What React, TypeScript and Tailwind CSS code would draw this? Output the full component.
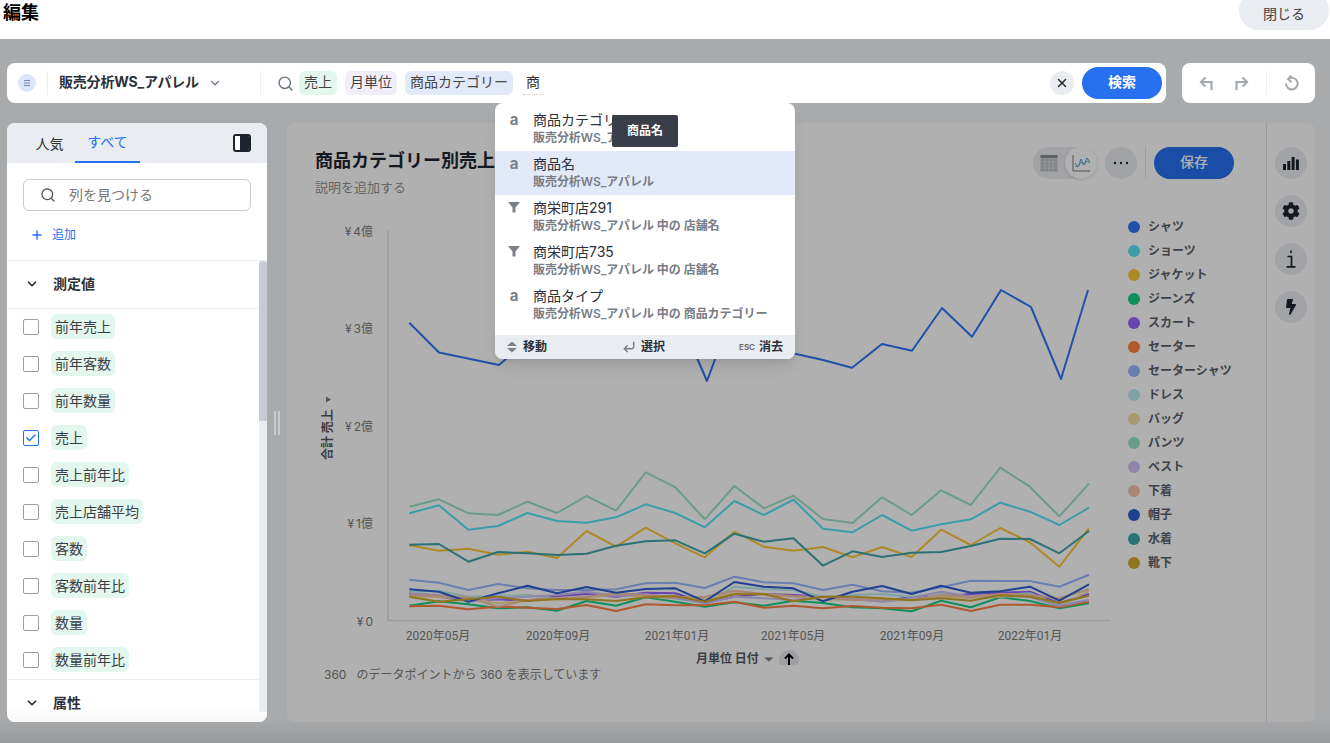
import { ChevronDown, CornerDownLeft, Check, Plus, Search, X } from 'lucide-react';
import { FaBolt, FaCog } from 'react-icons/fa';

const toPoints = (zs: number[]) => zs.map((z, i) => `${(409.3 + 29.55 * i).toFixed(1)},${(440 + z / 3).toFixed(1)}`).join(' ');

const shirts =
  '409.3,322.7 439,352.5 499,365 528,340 558,330 588,345 617,320 647,300 677,312 707,381 737,300 766,340 795,353.7 823,360 852,367.7 882,344 912,350.7 942,308 972,336.7 1001,290 1031,307 1061,379 1088,290';

const series = [
  { name: 'シャツ', color: '#2f75f5' },
  { name: 'ショーツ', color: '#55e4f2', z: [220, 196, 269, 258, 219, 243, 248, 232, 193, 219, 262, 183, 225, 179, 266, 277, 225, 272, 253, 238, 188, 215, 255, 203] },
  { name: 'ジャケット', color: '#fcc838', z: [316, 332, 326, 344, 335, 354, 273, 320, 263, 310, 352, 275, 320, 332, 321, 352, 321, 351, 269, 315, 264, 307, 380, 265] },
  { name: 'ジーンズ', color: '#18d084', z: [497, 484, 493, 505, 502, 512, 483, 497, 472, 485, 500, 487, 497, 482, 489, 502, 505, 514, 482, 502, 472, 483, 505, 490] },
  { name: 'スカート', color: '#9763ff', z: [462, 470, 482, 478, 483, 468, 462, 470, 458, 460, 488, 470, 462, 465, 470, 478, 482, 472, 470, 462, 458, 455, 490, 462] },
  { name: 'セーター', color: '#ff8142', z: [499, 497, 508, 500, 503, 507, 495, 513, 493, 496, 496, 485, 503, 497, 505, 498, 503, 505, 494, 513, 494, 494, 502, 485] },
  { name: 'セーターシャツ', color: '#97b8ff', z: [419, 428, 450, 432, 445, 450, 450, 448, 430, 428, 444, 410, 427, 430, 450, 434, 454, 458, 442, 422, 423, 423, 440, 404] },
  { name: 'ドレス', color: '#b8ecef', z: [455, 452, 470, 468, 465, 478, 470, 462, 465, 470, 490, 440, 448, 450, 470, 465, 462, 470, 458, 470, 465, 460, 495, 480] },
  { name: 'バッグ', color: '#f5dfa8', z: [468, 472, 475, 490, 480, 478, 472, 465, 470, 475, 478, 458, 465, 470, 480, 478, 482, 480, 470, 475, 470, 468, 498, 452] },
  { name: 'パンツ', color: '#9ce3c9', z: [200, 178, 220, 225, 185, 219, 168, 212, 97, 142, 238, 138, 205, 167, 237, 249, 172, 225, 151, 195, 83, 140, 229, 131] },
  { name: 'ベスト', color: '#d0c0f5', z: [460, 465, 480, 475, 470, 465, 455, 468, 462, 475, 490, 470, 475, 480, 470, 478, 485, 475, 455, 470, 465, 470, 498, 480] },
  { name: '下着', color: '#f5c4a8', z: [465, 468, 472, 500, 480, 475, 470, 460, 465, 472, 470, 452, 462, 468, 472, 480, 478, 480, 465, 470, 462, 465, 475, 448] },
  { name: '帽子', color: '#2f5fd0', z: [448, 455, 485, 460, 437, 460, 441, 458, 447, 445, 484, 426, 440, 445, 484, 455, 438, 462, 437, 458, 454, 440, 482, 433] },
  { name: '水着', color: '#3fa6ac', z: [314, 312, 365, 336, 340, 345, 341, 317, 304, 301, 340, 281, 305, 295, 377, 334, 351, 338, 336, 318, 296, 297, 340, 273] },
  { name: '靴下', color: '#d4a82e', z: [470, 485, 478, 470, 483, 477, 478, 483, 472, 468, 485, 463, 462, 484, 470, 470, 475, 481, 475, 482, 466, 470, 488, 467] },
];

const measures = ['前年売上', '前年客数', '前年数量', '売上', '売上前年比', '売上店舗平均', '客数', '客数前年比', '数量', '数量前年比'];

const suggestions = [
  { icon: 'a', title: '商品カテゴリー', sub: '販売分析WS_アパレル', first: true },
  { icon: 'a', title: '商品名', sub: '販売分析WS_アパレル', active: true },
  { icon: 'f', title: '商栄町店291', sub: '販売分析WS_アパレル 中の 店舗名' },
  { icon: 'f', title: '商栄町店735', sub: '販売分析WS_アパレル 中の 店舗名' },
  { icon: 'a', title: '商品タイプ', sub: '販売分析WS_アパレル 中の 商品カテゴリー' },
];

const yTicks = [
  { label: '4億', y: 232 },
  { label: '3億', y: 329 },
  { label: '2億', y: 427 },
  { label: '1億', y: 524 },
  { label: '0', y: 622 },
];

const xTicks = [
  { label: '2020年05月', x: 438 },
  { label: '2020年09月', x: 558 },
  { label: '2021年01月', x: 677 },
  { label: '2021年05月', x: 793 },
  { label: '2021年09月', x: 912 },
  { label: '2022年01月', x: 1030 },
];

function Chart() {
  return (
    <svg width="833" height="450" viewBox="287 215 833 450" className="block shrink-0">
      <path d="M388 230V620.500H1110" fill="none" stroke="#e2e2e2" strokeWidth="1.500" />
      {yTicks.map((t) => (
        <text key={t.label} x="373" y={t.y + 4} textAnchor="end" fontSize="12" fill="#7d7d7d">
          <tspan>¥</tspan>
          <tspan dx="2">{t.label}</tspan>
        </text>
      ))}
      {xTicks.map((t) => (
        <text key={t.label} x={t.x} y="640" textAnchor="middle" fontSize="12" fill="#7d7d7d" fontFamily="Roboto, 'Noto Sans CJK JP', sans-serif">
          {t.label}
        </text>
      ))}
      <polyline points={shirts} fill="none" stroke={series[0].color} strokeWidth="2" strokeLinejoin="round" />
      {series.slice(1).map((s) => (
        <polyline key={s.name} points={toPoints(s.z!)} fill="none" stroke={s.color} strokeWidth="2" strokeLinejoin="round" />
      ))}
      <text transform="translate(332 460) rotate(-90)" fontSize="12" fontWeight="700" fill="#55585f">
        合計 売上
      </text>
      <path d="M326 396.500l5 3-5 3z" fill="#7d7d7d" />
      <text x="696" y="663" fontSize="12" fontWeight="700" fill="#55585f">
        月単位 日付
      </text>
      <path d="M764 657.500h9.500l-4.750 4z" fill="#7d7d7d" />
      <circle cx="789" cy="660" r="10" fill="#e6e6ee" />
      <path d="M789 666v-11M785 658.500l4-4 4 4" fill="none" stroke="#000" strokeWidth="2" />
    </svg>
  );
}

function SearchBar() {
  return (
    <div className="relative z-20 flex h-10 flex-1 items-center rounded-lg bg-white pl-[11px] pr-1">
      <div className="flex h-[18px] w-[18px] items-center justify-center rounded-full bg-[#dbe6f9]">
        <svg width="8" height="8" viewBox="0 0 8 8">
          <path d="M1 1.500h6M1 4h6M1 6.500h6" stroke="#6f86b5" strokeWidth="1.100" />
        </svg>
      </div>
      <div className="ml-[11px] h-6 w-px bg-[#eceef1]" />
      <div className="ml-[11px] w-[142px] whitespace-nowrap pb-[2px] text-sm font-bold tracking-[-0.2px] text-[#2b303a]">販売分析WS_アパレル</div>
      <ChevronDown className="ml-[7px] h-[14px] w-[14px] text-[#6b7280]" />
      <div className="ml-[38px] h-6 w-px bg-[#eceef1]" />
      <Search className="ml-4 h-[17px] w-[17px] text-[#6b7280]" />
      <div className="ml-[5px] flex h-6 w-[38px] items-center justify-center rounded-md bg-[#e3f7ee] pb-[2px] text-sm text-[#444]">売上</div>
      <div className="ml-2 flex h-6 w-[52px] items-center justify-center rounded-md bg-[#f1eefb] pb-[2px] text-sm text-[#444]">月単位</div>
      <div className="ml-2 flex h-6 w-[108px] items-center justify-center rounded-md bg-[#e2e9f9] pb-[2px] text-sm text-[#444]">商品カテゴリー</div>
      <div className="ml-[10px] flex h-6 w-5 items-center justify-center border-b border-dotted border-[#ccc] pb-[2px] text-sm text-[#333]">商</div>
      <div className="ml-auto flex h-6 w-6 items-center justify-center rounded-full bg-[#e9ecf1]">
        <X className="h-[14px] w-[14px] text-[#1d232f]" strokeWidth={2.5} />
      </div>
      <div className="ml-2 flex h-8 w-20 items-center justify-center rounded-full bg-[#2770ef] pb-[2px] text-sm font-bold text-white">検索</div>

      {/* Suggestions dropdown */}
      <div className="absolute left-[488px] top-10 w-[300px] overflow-hidden rounded-lg bg-white shadow-lg">
        <div className="pb-2">
          {suggestions.map((s) => (
            <div
              key={s.title}
              className={`flex h-11 items-start ${s.first ? 'mt-1' : ''} ${s.active ? 'bg-[#e2eafa]' : ''}`}
            >
              <div className="flex h-[24px] w-[38px] items-center justify-center">
                {s.icon === 'a' ? (
                  <span className="text-[15px] font-bold leading-none text-[#7b8089]">a</span>
                ) : (
                  <svg width="12" height="12" viewBox="0 0 12 12">
                    <path d="M0 1h12L7.500 6.500V11.500H4.500V6.500z" fill="#7b8089" />
                  </svg>
                )}
              </div>
              <div>
                <div className="h-[23px] pt-[3px] text-sm leading-5 text-[#2b303a]">{s.title}</div>
                <div className="text-xs font-semibold leading-4 tracking-[-0.05px] text-[#777c86]">{s.sub}</div>
              </div>
            </div>
          ))}
        </div>
        <div className="flex h-6 items-center justify-between bg-[#e9ecf1] pl-[11px] pr-3 text-xs font-bold text-[#2b303a]">
          <div className="flex items-center gap-[5px]">
            <svg width="12" height="12" viewBox="0 0 12 12">
              <path d="M6 .5l5 4.500H1zM6 11.500l-5-4.500h10z" fill="#7b8089" />
            </svg>
            移動
          </div>
          <div className="ml-[1px] flex items-center gap-[5px]">
            <CornerDownLeft className="h-[14px] w-[14px] text-[#7b8089]" strokeWidth={2.5} />
            選択
          </div>
          <div className="flex items-center gap-[4px]">
            <span className="text-[8px] font-semibold text-[#666]">ESC</span>
            消去
          </div>
        </div>
      </div>

      {/* Tooltip */}
      <div className="absolute left-[605px] top-[52px] flex h-8 w-[66px] items-center justify-center rounded-[2px] bg-[#3a3e48] text-xs font-bold text-white">
        商品名
      </div>
    </div>
  );
}

function UndoBar() {
  return (
    <div className="relative z-20 flex h-10 w-[133px] items-center rounded-lg bg-white text-[#a5a9ae]">
      <svg className="ml-4" width="16" height="16" viewBox="0 0 16 16" fill="none" stroke="currentColor" strokeWidth="2.200">
        <path d="M13.500 15V7H3M7.500 2.500L3 7l4.500 4.500" />
      </svg>
      <svg className="ml-5" width="16" height="16" viewBox="0 0 16 16" fill="none" stroke="currentColor" strokeWidth="2.200">
        <path d="M2.500 15V7H13M8.500 2.500L13 7l-4.500 4.500" />
      </svg>
      <div className="ml-4 h-6 w-px bg-[#eceef1]" />
      <svg className="ml-4" width="16" height="16" viewBox="0 0 16 16" fill="none" stroke="currentColor" strokeWidth="2">
        <path d="M5 4.200A5.800 5.800 0 1 1 3 8.500" />
        <path d="M8.500.5L5 4.200l3.500 2.800" />
      </svg>
    </div>
  );
}

function Sidebar() {
  return (
    <div className="relative z-20 flex w-[260px] shrink-0 flex-col overflow-hidden rounded-lg bg-white">
      <div className="flex h-10 shrink-0 items-stretch bg-[#e9ecf1] pl-[14px] pr-4">
        <div className="flex w-[54px] items-center justify-center pl-[3px] pt-[2px] text-sm text-[#333]">人気</div>
        <div className="flex w-[65px] items-center justify-center border-b-2 border-[#2770ef] text-sm text-[#2770ef]">すべて</div>
        <div className="ml-auto flex items-center">
          <div className="flex h-[18px] w-[18px] overflow-hidden rounded-[3px] border-2 border-[#1d232f]">
            <div className="w-1/3 bg-white" />
            <div className="flex-1 bg-[#1d232f]" />
          </div>
        </div>
      </div>
      <div className="h-[98px] shrink-0 border-b border-[#eceef1] px-4 pt-4">
        <div className="flex h-8 items-center rounded-md border border-[#c9ccd1] pl-4">
          <Search className="h-4 w-4 text-[#555]" />
          <span className="ml-[13px] text-sm text-[#777]">列を見つける</span>
        </div>
        <div className="mt-4 flex items-center text-xs text-[#2770ef]">
          <Plus className="ml-[7px] h-[14px] w-[14px]" strokeWidth={2.5} />
          <span className="ml-[8px]">追加</span>
        </div>
      </div>
      <div className="flex min-h-0 flex-1">
        <div className="min-w-0 flex-1 overflow-hidden">
          <div className="flex h-12 items-center border-b border-[#eceef1] pb-[2px] pl-[18px] text-sm font-bold text-[#2b303a]">
            <ChevronDown className="h-[14px] w-[14px]" strokeWidth={3} />
            <span className="ml-[14px]">測定値</span>
          </div>
          <div className="flex h-[371px] flex-col gap-3 border-b border-[#eceef1] pl-4 pt-[5px]">
            {measures.map((m) => (
              <div key={m} className="flex h-[25px] shrink-0 items-center">
                {m === '売上' ? (
                  <div className="flex h-4 w-4 items-center justify-center rounded-[2px] border border-[#2770ef]">
                    <Check className="h-3 w-3 text-[#2770ef]" strokeWidth={3} />
                  </div>
                ) : (
                  <div className="h-4 w-4 rounded-[2px] border border-[#9a9da3]" />
                )}
                <div className="ml-3 flex h-[25px] items-center rounded-md bg-[#e3f7ee] px-1 text-sm text-[#3a3f47]">{m}</div>
              </div>
            ))}
          </div>
          <div className="flex h-12 items-center pb-[2px] pl-[18px] text-sm font-bold text-[#2b303a]">
            <ChevronDown className="h-[14px] w-[14px]" strokeWidth={3} />
            <span className="ml-[14px]">属性</span>
          </div>
        </div>
        <div className="mb-[10px] w-2 shrink-0 bg-[#e9ecf1]">
          <div className="h-[160px] rounded-t-sm bg-[#c7cbd3]" />
        </div>
      </div>
      <div className="absolute inset-x-0 bottom-0 h-[14px] bg-gradient-to-b from-transparent to-[#f8f8f8]" />
    </div>
  );
}

function SideButton({ children }: { children: React.ReactNode }) {
  return <div className="flex h-8 w-8 items-center justify-center rounded-full bg-[#e9ecf1] text-[#1d232f]">{children}</div>;
}

function ChartPanel() {
  return (
    <div className="flex min-w-0 flex-1 rounded-lg bg-white">
      <div className="flex min-w-0 flex-1 flex-col">
        <div className="flex h-[92px] shrink-0 items-start justify-between pl-7 pr-8 pt-6">
          <div>
            <div className="text-lg font-bold leading-7 text-[#1d232f]">商品カテゴリー別売上</div>
            <div className="pt-[2px] text-[13px] leading-5 text-[#939393]">説明を追加する</div>
          </div>
          <div className="flex items-center">
            <div className="flex h-8 w-16 items-center rounded-full bg-[#e9ecf1]">
              <svg className="ml-[7px]" width="18" height="18" viewBox="0 0 18 18">
                <rect x="0.500" y="1" width="17" height="3" fill="#8a8d92" />
                <path d="M.5 4.500h17v13H.5z" fill="#b9bcc1" />
                <path d="M.5 8h17M.5 11h17M.5 14h17M5 4.500v13M9 4.500v13M13 4.500v13" stroke="#e9ecf1" strokeWidth="0.600" />
              </svg>
              <div className="ml-[7px] flex h-8 w-8 items-center justify-center rounded-full bg-white shadow-sm">
                <svg width="20" height="20" viewBox="0 0 20 20" fill="none">
                  <path d="M2 2v16h17" stroke="#777" strokeWidth="1" />
                  <path d="M4 10l3 4 3-8 3 6 3-7 3 4" stroke="#4a8fd8" strokeWidth="0.900" />
                  <path d="M4 13l3 1 3-5 3 3 3-4 3 2" stroke="#58b8b8" strokeWidth="0.900" />
                </svg>
              </div>
            </div>
            <div className="ml-2 flex h-8 w-8 items-center justify-center rounded-full bg-[#e9ecf1]">
              <svg width="16" height="4" viewBox="0 0 16 4">
                <circle cx="2" cy="2" r="1.200" fill="#1d232f" />
                <circle cx="8" cy="2" r="1.200" fill="#1d232f" />
                <circle cx="14" cy="2" r="1.200" fill="#1d232f" />
              </svg>
            </div>
            <div className="ml-2 h-8 w-px bg-[#e2e4e8]" />
            <div className="ml-2 flex h-8 w-20 items-center justify-center rounded-full bg-[#2770ef] pb-[2px] text-sm font-medium text-white">保存</div>
          </div>
        </div>
        <div className="flex min-h-0 flex-1">
          <div className="flex flex-col">
            <Chart />
            <div className="mt-[2px] pl-[37px] text-xs leading-4 text-[#7d7d7d]">360 &nbsp;&nbsp;のデータポイントから 360 を表示しています</div>
          </div>
          <div className="pl-[8px]">
            {series.map((s) => (
              <div key={s.name} className="flex h-6 items-center gap-2">
                <div className="h-3 w-3 rounded-full" style={{ backgroundColor: s.color }} />
                <span className="whitespace-nowrap text-xs font-bold text-[#5b5f68]">{s.name}</span>
              </div>
            ))}
          </div>
        </div>
      </div>
      <div className="flex w-[49px] shrink-0 flex-col items-center gap-4 border-l border-[#dfe1e5] pt-6">
        <SideButton>
          <svg width="16" height="16" viewBox="0 0 16 16" fill="currentColor">
            <path d="M0 9h3v6H0zM4.300 6h3v9h-3zM8.600 2h3v13h-3zM12.900 4.500h3V15h-3z" />
          </svg>
        </SideButton>
        <SideButton>
          <FaCog className="h-[18px] w-[18px]" />
        </SideButton>
        <SideButton>
          <svg width="10" height="18" viewBox="0 0 10 18" fill="none" stroke="currentColor" strokeWidth="1.700">
            <path d="M5 .5v2.500M1.500 6.500H5.500V16.500M.5 16.800h9" />
          </svg>
        </SideButton>
        <SideButton>
          <FaBolt className="h-4 w-4" />
        </SideButton>
      </div>
    </div>
  );
}

export default function App() {
  return (
    <div className="flex h-screen w-full flex-col overflow-hidden bg-white font-['Inter','Noto_Sans_CJK_JP',sans-serif]">
      <div className="flex h-[39px] shrink-0 items-start justify-between pl-[3px] pr-px">
        <div className="mt-[-1px] text-lg font-bold leading-7 text-black">編集</div>
        <div className="mt-[-10px] flex h-10 w-[90px] items-center justify-center rounded-full bg-[#e9ecf1] pt-[8px] text-sm text-[#444]">閉じる</div>
      </div>
      <div className="relative flex min-h-0 flex-1 flex-col gap-5 bg-[#f4f6f9] pl-[7px] pr-[15px] pt-6">
        {/* Dimmed backdrop behind the search UI */}
        <div className="absolute inset-0 z-10 bg-black/[0.31]" />
        <div className="absolute inset-x-0 bottom-0 z-10 h-[24px] bg-gradient-to-b from-transparent to-black/10" />
        <div className="flex gap-4">
          <SearchBar />
          <UndoBar />
        </div>
        <div className="flex h-[599px]">
          <Sidebar />
          <div className="relative z-20 flex w-5 shrink-0 items-center justify-center gap-[2px]">
            <div className="h-6 w-[2px] bg-[#c9cacc]" />
            <div className="h-6 w-[2px] bg-[#c9cacc]" />
          </div>
          <ChartPanel />
        </div>
      </div>
    </div>
  );
}
